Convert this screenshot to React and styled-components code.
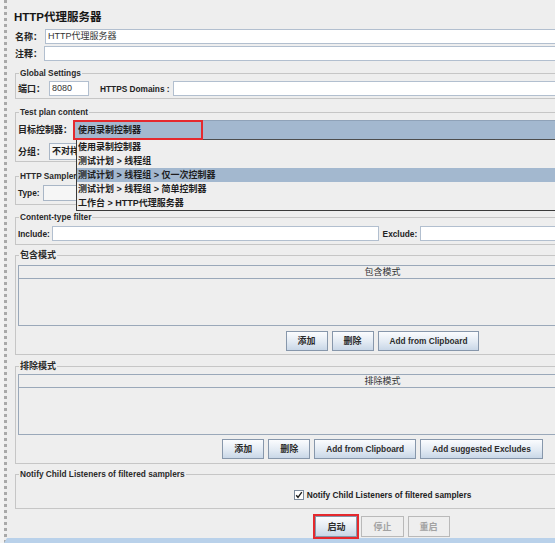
import styled, { createGlobalStyle } from 'styled-components';

const GlobalStyle = createGlobalStyle`
  html, body {
    margin: 0;
    padding: 0;
    overflow: hidden;
    background: #f3f3f3;
  }
  body {
    font-family: "Liberation Sans", "Noto Sans CJK SC", sans-serif;
    color: #222;
  }
  * { box-sizing: border-box; }
`;

const Frame = styled.div`
  width: 760px;
  height: 543px;
  margin-left: 4px;
  border-left: 3px dotted #a9a9a9;
  border-bottom: 5px solid #b9d1ea;
  background: #eeeeee;
  padding: 0 14px 0 8px;
  display: flex;
  flex-direction: column;
`;

const Title = styled.div`
  margin: 9px 0 0 -1px;
  font-size: 11.5px;
  line-height: 16px;
  font-weight: bold;
  color: #151515;
`;

const Row = styled.div`
  display: flex;
  align-items: center;
  height: ${p => p.$h || 15}px;
  margin-top: ${p => p.$mt || 0}px;
  justify-content: ${p => (p.$center ? 'center' : 'flex-start')};
  gap: ${p => p.$gap || 0}px;
`;

const Label = styled.span`
  font-size: ${p => (p.$en ? '8.3px' : '9px')};
  font-weight: bold;
  line-height: 12px;
  white-space: nowrap;
  color: #222;
  margin-left: ${p => p.$ml || 0}px;
  margin-right: ${p => p.$mr || 0}px;
`;

const Field = styled.div`
  flex: ${p => (p.$w ? 'none' : 1)};
  width: ${p => (p.$w ? `${p.$w}px` : 'auto')};
  height: 100%;
  background: #fff;
  border: 1px solid #b2bfcf;
  padding: 0 2px;
  font-size: 9px;
  line-height: 13px;
  white-space: nowrap;
  overflow: hidden;
  color: #333;
`;

const Group = styled.fieldset`
  margin: ${p => p.$mt}px 0 0;
  padding: ${p => p.$pt}px 2px ${p => p.$pb}px;
  border: 1px solid #c6c6c6;
  min-width: 0;
`;

const Legend = styled.legend`
  margin-left: 1px;
  padding: 0 1px;
  font-size: ${p => (p.$en ? '8.3px' : '9px')};
  font-weight: bold;
  line-height: 10px;
  color: #2a2a2a;
`;

const Combo = styled.div`
  position: relative;
  flex: 1;
  height: 100%;
  background: #a3b8cf;
  border-top: 1px solid #8fa2b8;
  border-bottom: 1px solid #4d4d4d;
  padding-left: 5px;
  font-size: 9px;
  font-weight: bold;
  line-height: 18px;
  color: #1c1c1c;
`;

const Mark = styled.div`
  position: absolute;
  left: 0;
  top: -1px;
  width: 130px;
  height: 20px;
  border: 2px solid #e5292e;
`;

const Popup = styled.div`
  position: absolute;
  left: 3px;
  right: 0;
  top: 19px;
  z-index: 5;
  background: #eeeeee;
  border-left: 1px solid #3a3a3a;
  border-bottom: 1px solid #3a3a3a;
`;

const Item = styled.div`
  height: 14px;
  padding-left: 1px;
  font-size: 9px;
  font-weight: bold;
  line-height: 14px;
  color: #1e1e1e;
  white-space: nowrap;
  background: ${p => (p.$active ? '#a3b8cf' : 'transparent')};
`;

const Select = styled.div`
  width: ${p => p.$w}px;
  height: 100%;
  background: #f6f6f6;
  border: 1px solid #a9b6c6;
  padding-left: 2px;
  font-size: 9px;
  font-weight: bold;
  line-height: 15px;
  white-space: nowrap;
  overflow: hidden;
`;

const Table = styled.div`
  height: 61px;
  border: 1px solid #9aa8b9;
  display: flex;
  flex-direction: column;
`;

const TableHead = styled.div`
  height: 13px;
  border-bottom: 1px solid #9aa8b9;
  text-align: center;
  font-size: 9px;
  line-height: 12px;
  color: #333;
`;

const Btn = styled.button`
  height: ${p => p.$h || 20}px;
  padding: 0 11px;
  border: 1px solid ${p => (p.disabled ? '#b9b9b9' : '#8797ab')};
  border-radius: 0;
  background: ${p => (p.disabled ? '#eeeeee' : 'linear-gradient(#fbfcfe, #e2eaf3 55%, #c9d7e7)')};
  font-family: inherit;
  font-size: ${p => (p.$en ? '8.3px' : '9px')};
  font-weight: bold;
  line-height: 12px;
  color: ${p => (p.disabled ? '#a2a2a2' : '#2c2c2c')};
  white-space: nowrap;
  outline: ${p => (p.$marked ? '2px solid #e5292e' : 'none')};
`;

const Check = styled.span`
  width: 10px;
  height: 10px;
  margin-right: 3px;
  background: #fff;
  border: 1px solid #7b8a9c;
  display: flex;
  align-items: center;
  justify-content: center;
`;

const items = [
  '使用录制控制器',
  '测试计划 > 线程组',
  '测试计划 > 线程组 > 仅一次控制器',
  '测试计划 > 线程组 > 简单控制器',
  '工作台 > HTTP代理服务器',
];

export default function App() {
  return (
    <>
      <GlobalStyle />
      <Frame>
        <Title>HTTP代理服务器</Title>
        <Row $mt={4}>
          <Label $mr={3}>名称：</Label>
          <Field>HTTP代理服务器</Field>
        </Row>
        <Row $mt={2}>
          <Label $mr={2}>注释：</Label>
          <Field />
        </Row>

        <Group $mt={7} $pt={3} $pb={2}>
          <Legend $en>Global Settings</Legend>
          <Row>
            <Label $mr={4}>端口：</Label>
            <Field $w={40}>8080</Field>
            <Label $en $ml={11} $mr={3}>HTTPS Domains :</Label>
            <Field />
          </Row>
        </Group>

        <Group $mt={8} $pt={3} $pb={1}>
          <Legend $en>Test plan content</Legend>
          <Row $h={20}>
            <Label $mr={1}>目标控制器：</Label>
            <Combo>
              使用录制控制器
              <Mark />
              <Popup>
                {items.map((t, i) => (
                  <Item key={t} $active={i === 2}>{t}</Item>
                ))}
              </Popup>
            </Combo>
          </Row>
          <Row $h={17} $mt={3}>
            <Label $mr={4}>分组：</Label>
            <Select $w={160}>不对样本分组</Select>
          </Row>
        </Group>

        <Group $mt={9} $pt={4} $pb={3}>
          <Legend $en>HTTP Samplers settings</Legend>
          <Row $h={16}>
            <Label $en $mr={3}>Type:</Label>
            <Select $w={200} />
          </Row>
        </Group>

        <Group $mt={7} $pt={4} $pb={3}>
          <Legend $en>Content-type filter</Legend>
          <Row>
            <Label $en $mr={2}>Include:</Label>
            <Field />
            <Label $en $ml={4} $mr={3}>Exclude:</Label>
            <Field />
          </Row>
        </Group>

        <Group $mt={5} $pt={5} $pb={3}>
          <Legend>包含模式</Legend>
          <Table>
            <TableHead>包含模式</TableHead>
          </Table>
          <Row $h={20} $mt={5} $center $gap={4}>
            <Btn>添加</Btn>
            <Btn>删除</Btn>
            <Btn $en>Add from Clipboard</Btn>
          </Row>
        </Group>

        <Group $mt={6} $pt={3} $pb={4}>
          <Legend>排除模式</Legend>
          <Table>
            <TableHead>排除模式</TableHead>
          </Table>
          <Row $h={20} $mt={4} $center $gap={4}>
            <Btn>添加</Btn>
            <Btn>删除</Btn>
            <Btn $en>Add from Clipboard</Btn>
            <Btn $en>Add suggested Excludes</Btn>
          </Row>
        </Group>

        <Group $mt={5} $pt={9} $pb={6}>
          <Legend $en>Notify Child Listeners of filtered samplers</Legend>
          <Row $h={14} $center>
            <Check>
              <svg width="8" height="8" viewBox="0 0 8 8">
                <path d="M1.2 4.2 L3 6.3 L6.8 1.2" fill="none" stroke="#1f1f1f" strokeWidth="1.4" />
              </svg>
            </Check>
            <Label $en>Notify Child Listeners of filtered samplers</Label>
          </Row>
        </Group>

        <Row $h={21} $mt={7} $center $gap={4}>
          <Btn $h={21} $marked>启动</Btn>
          <Btn $h={21} disabled>停止</Btn>
          <Btn $h={21} disabled>重启</Btn>
        </Row>
      </Frame>
    </>
  );
}
